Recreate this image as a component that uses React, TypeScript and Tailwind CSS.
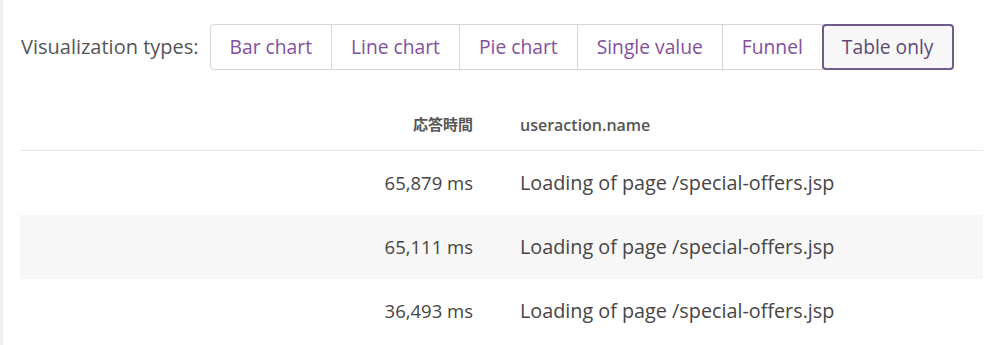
import { useState } from 'react'

const TYPES = ['Bar chart', 'Line chart', 'Pie chart', 'Single value', 'Funnel', 'Table only']

const ROWS = [
  { time: '65,879 ms', name: 'Loading of page /special-offers.jsp' },
  { time: '65,111 ms', name: 'Loading of page /special-offers.jsp' },
  { time: '36,493 ms', name: 'Loading of page /special-offers.jsp' },
]

export default function App() {
  const [active, setActive] = useState('Table only')

  return (
    <div
      className="h-[345px] w-[1000px] overflow-hidden border-l-[3px] border-[#f0f0f0] bg-white text-[#454545]"
      style={{ fontFamily: '"Open Sans", "Noto Sans CJK JP", sans-serif' }}
    >
      <div className="flex items-center pl-[18px] pt-[24px]">
        <span className="mr-[11px] text-[20px] text-[#555]">Visualization types:</span>
        <div className="flex h-[46px]">
          {TYPES.map((t, i) => {
            const sel = t === active
            return (
              <button
                key={t}
                type="button"
                onClick={() => setActive(t)}
                className={
                  sel
                    ? 'relative z-10 -ml-px rounded-[4px] border-2 border-[#6f5b8c] bg-[#f7f7f7] px-[18px] text-[19.25px] text-[#5b4a78]'
                    : `border-y border-r border-[#d6d6d6] bg-white px-[19px] text-[19.25px] text-[#844f9f] ${i === 0 ? 'rounded-l-[4px] border-l' : ''}`
                }
              >
                {t}
              </button>
            )
          })}
        </div>
      </div>

      <div className="mx-[17px] mt-[29px]">
        <div className="grid h-[52px] grid-cols-[477px_1fr] items-center border-b border-[#e5e5e5] text-[#555]">
          <div className="pr-[24px] text-right text-[15px] font-semibold">応答時間</div>
          <div className="pl-[23px] text-[16px] font-semibold">useraction.name</div>
        </div>
        {ROWS.map((r, i) => (
          <div
            key={i}
            className={`grid h-[64px] grid-cols-[477px_1fr] items-center ${i % 2 === 1 ? 'bg-[#f7f7f7]' : 'bg-white'}`}
          >
            <div className="pr-[24px] text-right text-[18.5px]">{r.time}</div>
            <div className="pl-[23px] text-[19.8px]">{r.name}</div>
          </div>
        ))}
      </div>
    </div>
  )
}
